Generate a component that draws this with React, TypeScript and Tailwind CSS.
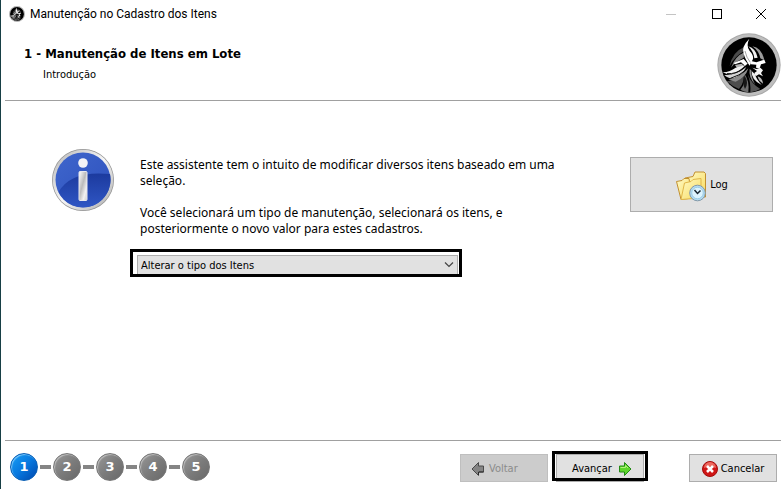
import { useState } from "react"

const steps = [1, 2, 3, 4, 5]

const maintenanceTypes = ["Alterar o tipo dos Itens", "Alterar o grupo dos Itens", "Alterar a unidade dos Itens"]

function VikingLogo({ className }: { className: string }) {
  return (
    <svg viewBox="0 0 192 192" className={className} aria-hidden="true">
      <circle cx="96" cy="96" r="95" fill="#a8a8a8" />
      <circle cx="96" cy="96" r="92" fill="#bebebe" />
      <circle cx="96" cy="96" r="83" fill="#000" />
      {/* cape */}
      <path d="M28 144 Q58 146 78 122 Q86 142 66 168 Q46 160 28 144Z" fill="#4d4d4d" />
      <path d="M82 122 Q98 142 94 178 Q80 176 70 170 Q88 150 82 122Z" fill="#6f6f6f" />
      <path d="M92 124 Q104 154 130 168 Q114 177 100 178 Q102 150 92 124Z" fill="#555" />
      <path d="M84 130 Q74 150 84 168 Q96 152 84 130Z" fill="#161616" />
      {/* helmet bands and back horn */}
      <path d="M82 42 Q46 56 38 100 Q52 70 82 54Z" fill="#4a4a4a" />
      <path d="M82 58 Q54 70 42 104 Q58 84 80 74Z" fill="#858585" />
      <path d="M50 90 L80 78 L92 92 L84 98 L72 88 L54 94Z" fill="#fff" />
      <path d="M54 96 L74 92 L80 98 L62 108 Z" fill="#b5b5b5" />
      <path d="M17 118 Q40 116 56 104 L86 96 Q66 118 40 124 Q28 124 17 118Z" fill="#f2f2f2" />
      <path d="M22 126 Q56 128 88 102 Q74 128 50 136 Q34 138 22 126Z" fill="#d5d5d5" />
      <path d="M34 140 Q68 134 94 106 Q86 134 56 146Z" fill="#8c8c8c" />
      <path d="M30 122 Q58 124 82 104 M40 136 Q68 128 88 110" fill="none" stroke="#111" strokeWidth="3" />
      {/* front horn and dome */}
      <path d="M97 17 Q72 42 80 62 Q84 78 98 98 L108 78 Q110 66 98 54 Q86 38 97 17Z" fill="#fff" />
      <path d="M94 40 Q116 46 122 74 L112 76 Q110 56 94 40Z" fill="#f0f0f0" />
      <path d="M106 40 Q134 44 142 82 L130 76 Q126 54 106 40Z" fill="#9c9c9c" />
      <path d="M84 54 Q88 74 100 88" fill="none" stroke="#777" strokeWidth="2" />
      {/* brow, nose and beard */}
      <path d="M102 84 L118 88 L142 80 L146 90 L132 94 L128 106 L117 104 L118 95 L102 94Z" fill="#fff" />
      <path d="M106 104 L118 108 L130 104 L138 112 L132 120 L138 130 L126 124 L116 130 L112 120 L120 114Z" fill="#f4f4f4" />
      <path d="M104 114 Q102 140 134 156 Q116 136 114 124Z" fill="#eee" />
      <path d="M122 130 Q136 134 138 152 Q124 144 122 130Z" fill="#bbb" />
      <path d="M98 108 Q94 134 114 154 Q102 132 103 112Z" fill="#909090" />
    </svg>
  )
}

function InfoIcon() {
  return (
    <svg viewBox="0 0 64 64" className="size-16 shrink-0" aria-hidden="true">
      <defs>
        <linearGradient id="info-rim" x1="0" y1="0" x2="1" y2="1">
          <stop offset="0" stopColor="#b4b4b4" />
          <stop offset=".5" stopColor="#f6f6f6" />
          <stop offset="1" stopColor="#aaa" />
        </linearGradient>
        <linearGradient id="info-blue" x1="0" y1="0" x2="1" y2="1">
          <stop offset="0" stopColor="#3f66cc" />
          <stop offset="1" stopColor="#2d50bd" />
        </linearGradient>
        <linearGradient id="info-dark" x1="0" y1="0" x2="0" y2="1">
          <stop offset="0" stopColor="#1c3a9e" />
          <stop offset="1" stopColor="#2f56c4" />
        </linearGradient>
        <linearGradient id="info-stem" x1="0" y1="0" x2="1" y2="1">
          <stop offset="0" stopColor="#fff" />
          <stop offset=".45" stopColor="#bbb" />
          <stop offset=".75" stopColor="#f2f2f2" />
          <stop offset="1" stopColor="#ccc" />
        </linearGradient>
      </defs>
      <circle cx="32" cy="32" r="31" fill="#929292" />
      <circle cx="32" cy="32" r="30.3" fill="url(#info-rim)" />
      <circle cx="32" cy="32" r="27.5" fill="url(#info-blue)" />
      <path d="M7.500 44 Q20 22 59 26 A27.5 27.5 0 0 1 7.500 44Z" fill="url(#info-dark)" />
      <circle cx="32" cy="15" r="4.800" fill="#f4f4f6" />
      <rect x="28" y="23.500" width="8" height="29" rx="1" fill="url(#info-stem)" stroke="#e8e8ee" />
    </svg>
  )
}

function FolderClockIcon() {
  return (
    <svg viewBox="0 0 32 32" className="size-8" aria-hidden="true">
      <defs>
        <linearGradient id="folder" x1="0" y1="0" x2="1" y2="1">
          <stop offset="0" stopColor="#fffbc8" />
          <stop offset="1" stopColor="#f8da5c" />
        </linearGradient>
      </defs>
      <path d="M10 8 L18 6.500 L20 2 H29 L30.500 3.500 V27 H12Z" fill="url(#folder)" stroke="#c29030" />
      <path d="M1.500 11.500 L7 10.500 L9 8.500 L14 8.500 L17 28 L6 29.500Z" fill="url(#folder)" stroke="#c29030" />
      <path d="M6 29.500 L9.500 13 L16 11.500 L18 9.500 L26 8.500 V28Z" fill="url(#folder)" stroke="#e0b648" />
      <circle cx="22.500" cy="23" r="7.800" fill="#b4ddf3" stroke="#8398a8" />
      <circle cx="22.500" cy="23" r="5.800" fill="#dcf3fd" stroke="#9acbe4" />
      <path d="M19.500 20 L22.500 23.500 L25.500 20.500" fill="none" stroke="#17252f" strokeWidth="1.500" />
    </svg>
  )
}

function ArrowIcon({ direction }: { direction: "left" | "right" }) {
  if (direction === "left") {
    return (
      <svg viewBox="0 0 14 16" className="h-4 w-3.5" aria-hidden="true">
        <path d="M7.500 1.500 L1 8 L7.500 14.500 V11 H12.500 V5 H7.500Z" fill="#858585" stroke="#4a4a4a" />
        <path d="M7.500 11 V14 M8 11 H12.500" stroke="#2a2a2a" />
      </svg>
    )
  }
  return (
    <svg viewBox="0 0 14 16" className="h-4 w-3.5" aria-hidden="true">
      <path d="M6.500 1.500 L13 8 L6.500 14.500 V11 H1.500 V5 H6.500Z" fill="#5fd62d" stroke="#238a16" />
      <path d="M2.500 6.500 H7.500 V4.500 L10 7" fill="none" stroke="#b4f27e" />
    </svg>
  )
}

function CancelIcon() {
  return (
    <svg viewBox="0 0 16 16" className="size-4" aria-hidden="true">
      <circle cx="8" cy="8" r="7.500" fill="#cf1717" stroke="#a40d0d" />
      <path d="M2 7 A6 6 0 0 1 14 7 Q8 4 2 7Z" fill="#ed6a60" />
      <path d="M5 5 L11 11 M11 5 L5 11" stroke="#fff" strokeWidth="2.600" />
    </svg>
  )
}

function TitleBar() {
  return (
    <div className="flex h-7 items-center pl-2">
      <VikingLogo className="size-4" />
      <span className="ml-[5px] flex-1 font-['Roboto',sans-serif] text-[12px] leading-4">
        Manutenção no Cadastro dos Itens
      </span>
      <button type="button" aria-label="Minimizar" disabled className="flex h-7 w-11 items-center justify-center">
        <span className="h-px w-2.5 bg-[#c4c4c4]" />
      </button>
      <button type="button" aria-label="Maximizar" className="flex h-7 w-12 items-center justify-center">
        <span className="size-2.5 border border-black" />
      </button>
      <button type="button" aria-label="Fechar" className="flex h-7 w-10 items-center justify-center">
        <svg viewBox="0 0 10 10" className="size-2.5">
          <path d="M0 0 L10 10 M10 0 L0 10" stroke="#000" />
        </svg>
      </button>
    </div>
  )
}

function StepList({ current }: { current: number }) {
  return (
    <ol className="flex items-center text-[13px] font-bold text-white">
      {steps.map((step) => (
        <li key={step} className="flex items-center">
          {step > 1 && <span className="mx-0.5 h-1 w-[11px] bg-[#858585]" />}
          <span
            className={
              step === current
                ? "flex size-7 items-center justify-center rounded-full border border-[#0a5fb5] bg-linear-to-br from-[#1ba0f5] via-[#0878df] to-[#0347ad] font-['DejaVu_Sans',sans-serif] shadow-[inset_1px_1px_1px_#7cc8fa]"
                : "flex size-7 items-center justify-center rounded-full border border-[#777] bg-linear-to-br from-[#999] via-[#7c7c7c] to-[#686868] font-['DejaVu_Sans',sans-serif] shadow-[inset_1px_1px_1px_#bdbdbd]"
            }
          >
            {step}
          </span>
        </li>
      ))}
    </ol>
  )
}

export default function App() {
  const [type, setType] = useState(maintenanceTypes[0])

  return (
    <div className="flex min-h-screen flex-col border-l border-[#173f45] bg-white pr-px font-['DejaVu_Sans_Condensed','DejaVu_Sans',sans-serif] text-[11px] text-black">
      <TitleBar />

      <header className="ml-1 flex items-start justify-between border-b border-[#a0a0a0] pt-[5px] pb-[3px]">
        <div className="pt-[13px] pl-[19px]">
          <h1 className="text-[13px] leading-4 font-bold">1 - Manutenção de Itens em Lote</h1>
          <p className="mt-1.5 ml-[19px] leading-3.5">Introdução</p>
        </div>
        <VikingLogo className="size-16" />
      </header>

      <main className="flex flex-1 items-start pt-[47px] pr-2 pl-[50px]">
        <InfoIcon />
        <div className="ml-[15px] flex-1">
          <div className="max-w-[450px] pt-[9px] pl-2.5 font-['Noto_Sans',sans-serif] text-[12px] leading-4">
            <p>Este assistente tem o intuito de modificar diversos itens baseado em uma seleção.</p>
            <p className="mt-4">
              Você selecionará um tipo de manutenção, selecionará os itens, e
              <br />
              posteriormente o novo valor para estes cadastros.
            </p>
          </div>
          <div className="relative mt-3 h-7 w-[332px] border-3 border-black pt-[3px] pr-px pl-1">
            <select
              aria-label="Tipo de manutenção"
              value={type}
              onChange={(e) => setType(e.target.value)}
              className="block h-[19px] w-full appearance-none border border-b-0 border-[#adadad] bg-[#e1e1e1] pt-0.5 pl-[3px]"
            >
              {maintenanceTypes.map((item) => (
                <option key={item}>{item}</option>
              ))}
            </select>
            <svg viewBox="0 0 10 6" className="pointer-events-none absolute top-2.5 right-[5px] h-1.5 w-2.5">
              <path d="M1 0.500 L5 4.500 L9 0.500" fill="none" stroke="#444" strokeWidth="1.200" />
            </svg>
          </div>
        </div>
        <button
          type="button"
          className="mt-[9px] flex h-[55px] w-[143px] items-center justify-center gap-[3px] border border-[#adadad] bg-[#e1e1e1] pt-0.5"
        >
          <FolderClockIcon />
          Log
        </button>
      </main>

      <footer className="ml-1 flex items-start justify-between border-t border-[#a0a0a0] pt-3 pr-1 pb-[7px] pl-[5px]">
        <StepList current={1} />
        <div className="flex pt-px">
          <button
            type="button"
            disabled
            className="flex h-7 w-[88px] items-center gap-1 border border-[#bfbfbf] bg-[#ccc] pt-0.5 pl-2.5 text-[#8b8b8b]"
          >
            <ArrowIcon direction="left" />
            Voltar
          </button>
          <div className="relative ml-2">
            <button
              type="button"
              className="flex h-7 w-[88px] items-center justify-center gap-1.5 border border-[#adadad] bg-[#e1e1e1] pt-0.5 pl-1"
            >
              Avançar
              <ArrowIcon direction="right" />
            </button>
            <span className="pointer-events-none absolute -inset-x-1 -top-[3px] bottom-px border-3 border-black" />
          </div>
          <button
            type="button"
            className="ml-[45px] flex h-7 w-[88px] items-center justify-center gap-[3px] border border-[#adadad] bg-[#e1e1e1] pt-0.5"
          >
            <CancelIcon />
            Cancelar
          </button>
        </div>
      </footer>
    </div>
  )
}
